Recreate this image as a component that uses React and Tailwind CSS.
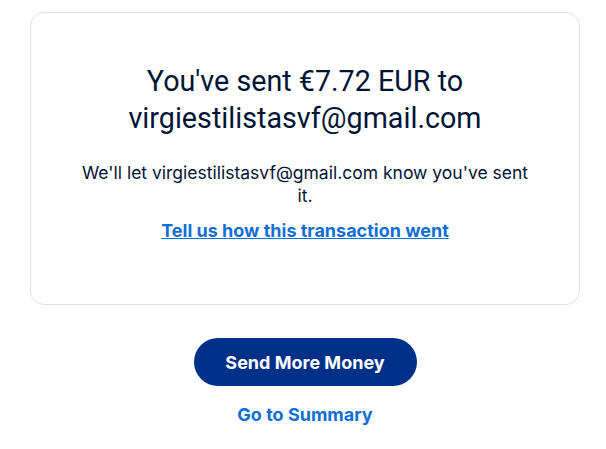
import React from 'react';

const App = () => {
    return (
        <div className="min-h-[449px] w-[606px] bg-white pt-3 pl-[30px] pr-[26px] flex flex-col items-center font-['Inter',sans-serif]">
            {/* confirmation card */}
            <div className="w-full h-[293px] border border-[#e2e2e2] rounded-[14px] flex flex-col items-center pt-[50px] px-10">
                <h1 className="text-[28.7px] leading-[37px] text-[#001435] text-center font-normal font-['Roboto',sans-serif]">
                    You've sent €7.72 EUR to<br />virgiestilistasvf@gmail.com
                </h1>
                <p className="mt-[24px] text-[17.5px] leading-[23px] text-[#001435] text-center w-[452px]">
                    We'll let virgiestilistasvf@gmail.com know you've sent it.
                </p>
                <a href="#" className="mt-[13px] text-[18px] leading-[22px] font-bold underline text-[#0f6fd6]">
                    Tell us how this transaction went
                </a>
            </div>

            {/* actions */}
            <button className="mt-[33px] w-[223px] h-[48px] rounded-full bg-[#003087] text-white text-[18px] font-bold">
                Send More Money
            </button>
            <a href="#" className="mt-[17px] text-[18px] leading-[24px] font-bold text-[#0f6fd6]">
                Go to Summary
            </a>
        </div>
    );
};

export default App;
